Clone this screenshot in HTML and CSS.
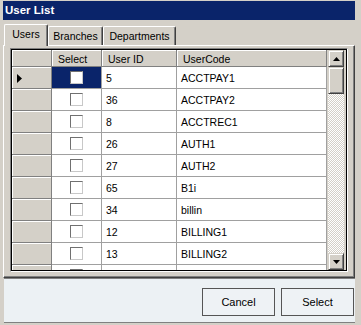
FILE: index.html
```html
<!DOCTYPE html>
<html lang="en">
  <head>
    <meta charset="UTF-8">
    <title>User List</title>
    <link rel="stylesheet" href="styles.css">
  </head>
  <body>
    <div class="window">
      <div class="titlebar">User List</div>
      <div class="tabs">
        <div class="tab tab-users active">Users</div>
        <div class="tab tab-branches">Branches</div>
        <div class="tab tab-depts">Departments</div>
      </div>
      <div class="page">
        <div class="grid">
          <div class="grid-inner">
            <div class="grid-body">
              <div class="row head">
                <div class="cell rh"></div>
                <div class="cell hc">Select</div>
                <div class="cell hc">User ID</div>
                <div class="cell hc">UserCode</div>
              </div>
              <div class="row current">
                <div class="cell rh"><svg width="5" height="9" viewBox="0 0 5 9"><path d="M0 0 L5 4.5 L0 9 Z" fill="#000"/></svg></div>
                <div class="cell chk selected"><span class="box"></span></div>
                <div class="cell">5</div>
                <div class="cell">ACCTPAY1</div>
              </div>
              <div class="row">
                <div class="cell rh"></div>
                <div class="cell chk"><span class="box"></span></div>
                <div class="cell">36</div>
                <div class="cell">ACCTPAY2</div>
              </div>
              <div class="row">
                <div class="cell rh"></div>
                <div class="cell chk"><span class="box"></span></div>
                <div class="cell">8</div>
                <div class="cell">ACCTREC1</div>
              </div>
              <div class="row">
                <div class="cell rh"></div>
                <div class="cell chk"><span class="box"></span></div>
                <div class="cell">26</div>
                <div class="cell">AUTH1</div>
              </div>
              <div class="row">
                <div class="cell rh"></div>
                <div class="cell chk"><span class="box"></span></div>
                <div class="cell">27</div>
                <div class="cell">AUTH2</div>
              </div>
              <div class="row">
                <div class="cell rh"></div>
                <div class="cell chk"><span class="box"></span></div>
                <div class="cell">65</div>
                <div class="cell">B1i</div>
              </div>
              <div class="row">
                <div class="cell rh"></div>
                <div class="cell chk"><span class="box"></span></div>
                <div class="cell">34</div>
                <div class="cell">billin</div>
              </div>
              <div class="row">
                <div class="cell rh"></div>
                <div class="cell chk"><span class="box"></span></div>
                <div class="cell">12</div>
                <div class="cell">BILLING1</div>
              </div>
              <div class="row">
                <div class="cell rh"></div>
                <div class="cell chk"><span class="box"></span></div>
                <div class="cell">13</div>
                <div class="cell">BILLING2</div>
              </div>
              <div class="row">
                <div class="cell rh"></div>
                <div class="cell chk"><span class="box"></span></div>
                <div class="cell"></div>
                <div class="cell"></div>
              </div>
            </div>
            <div class="vscroll">
              <div class="sbtn"><svg width="7" height="4" viewBox="0 0 7 4"><path d="M3.5 0 L7 4 L0 4 Z" fill="#000"/></svg></div>
              <div class="thumb"></div>
              <div class="track"></div>
              <div class="sbtn"><svg width="7" height="4" viewBox="0 0 7 4"><path d="M0 0 L7 0 L3.5 4 Z" fill="#000"/></svg></div>
            </div>
          </div>
        </div>
      </div>
      <div class="footer">
        <button type="button">Cancel</button>
        <button type="button">Select</button>
      </div>
    </div>
  </body>
</html>
```

FILE: styles.css
```css
* {
  box-sizing: border-box;
}

body {
  margin: 0;
  width: 361px;
  height: 325px;
  padding: 1px 0 0 3px;
  overflow: hidden;
  background-color: #d4d0c8;
  font-family: "Liberation Sans", Arial, sans-serif;
  font-size: 10.5px;
  color: #000;
}

.window {
  width: 352px;
}

.titlebar {
  height: 19px;
  padding-left: 2px;
  background-color: #0a246a;
  color: white;
  font-weight: bold;
  font-size: 11.5px;
  line-height: 19px;
}

.tabs {
  display: flex;
  align-items: flex-end;
  height: 25px;
  padding-left: 1px;
}

.tab {
  height: 19px;
  line-height: 18px;
  text-align: center;
  border-top: 1px solid #fff;
  border-left: 1px solid #fff;
  border-right: 1px solid #404040;
  border-radius: 2px 2px 0 0;
  box-shadow: inset -1px 0 #808080;
  background-color: #d4d0c8;
}

.tab-users { width: 44px; }
.tab-branches { width: 55px; }
.tab-depts { width: 73px; }

.tab.active {
  height: 22px;
  line-height: 19px;
  margin-bottom: -1px;
  z-index: 1;
}

.page {
  height: 233px;
  padding: 2px 6px 5px 6px;
  border: 1px solid;
  border-color: #fff #404040 #404040 #fff;
  box-shadow: inset -1px -1px #808080;
}

.grid {
  height: 224px;
  border: 1px solid;
  border-color: #808080 #fff #fff #808080;
}

.grid-inner {
  display: flex;
  height: 100%;
  border: 1px solid #000;
  background-color: #d4d0c8;
}

.grid-body {
  width: 315px;
  overflow: hidden;
}

.row {
  display: grid;
  grid-template-columns: 40px 50px 75px 150px;
  height: 22px;
}

.row.head {
  height: 17px;
}

.cell {
  display: flex;
  align-items: center;
  padding: 1px 0 0 4px;
  white-space: nowrap;
  background-color: #fff;
  border-right: 1px solid #a0a0a0;
  border-bottom: 1px solid #a0a0a0;
}

.cell.hc {
  padding-left: 6px;
  background-color: #d4d0c8;
  border-right-color: #808080;
  border-bottom-color: #808080;
  box-shadow: inset 1px 1px #fff;
}

.cell.rh {
  padding-left: 5px;
  background-color: #d4d0c8;
  border-right-color: #808080;
  border-bottom-color: #808080;
  box-shadow: inset 1px 1px #fff;
}

.cell.chk {
  justify-content: center;
  padding: 0;
}

.cell.selected {
  background-color: #0a246a;
}

.box {
  width: 13px;
  height: 13px;
  background-color: #fff;
  border: 1px solid;
  border-color: #707070 #c8c8c8 #c8c8c8 #707070;
}

.vscroll {
  display: flex;
  flex-direction: column;
  width: 17px;
  border-left: 1px solid #d4d0c8;
}

.sbtn,
.thumb {
  display: flex;
  align-items: center;
  justify-content: center;
  background-color: #d4d0c8;
  border: 1px solid;
  border-color: #d4d0c8 #404040 #404040 #d4d0c8;
  box-shadow: inset 1px 1px #fff, inset -1px -1px #808080;
}

.sbtn {
  height: 17px;
}

.thumb {
  height: 27px;
}

.track {
  flex: 1;
  background: repeating-conic-gradient(#d4d0c8 0 25%, #fff 0 50%) 0 0 / 2px 2px;
}

.footer {
  display: flex;
  justify-content: flex-end;
  gap: 6px;
  height: 45px;
  margin-left: 1px;
  padding: 9px 1px 0 0;
  background-color: #ecf1f4;
  border-top: 1px solid #808080;
  border-bottom: 1px solid #808080;
}

button {
  width: 73px;
  height: 28px;
  padding: 0;
  background-color: #eef2f5;
  border: 1px solid #555;
  font-family: "Liberation Sans", Arial, sans-serif;
  font-size: 11px;
  color: #000;
}
```
